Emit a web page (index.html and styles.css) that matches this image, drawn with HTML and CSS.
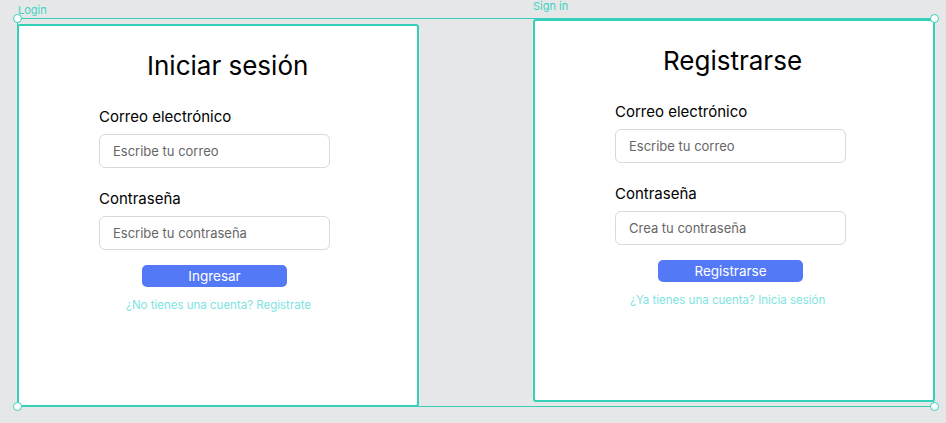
FILE: index.html
```html
<!DOCTYPE html>
<html lang="es">
<head>
<meta charset="utf-8">
<title>Login / Sign in</title>
<link rel="stylesheet" href="styles.css">
</head>
<body>
<div class="canvas">
  <span class="frame-name name-login">Login</span>
  <span class="frame-name name-sign">Sign in</span>

  <section class="frame frame-login">
    <h1 class="title">Iniciar sesión</h1>
    <form class="form">
      <label class="label">Correo electrónico</label>
      <div class="input">Escribe tu correo</div>
      <label class="label label-second">Contraseña</label>
      <div class="input">Escribe tu contraseña</div>
      <div class="button">Ingresar</div>
    </form>
    <a class="link link-login">¿No tienes una cuenta? Registrate</a>
  </section>

  <section class="frame frame-sign">
    <h1 class="title">Registrarse</h1>
    <form class="form">
      <label class="label">Correo electrónico</label>
      <div class="input">Escribe tu correo</div>
      <label class="label label-second">Contraseña</label>
      <div class="input">Crea tu contraseña</div>
      <div class="button">Registrarse</div>
    </form>
    <a class="link link-sign">¿Ya tienes una cuenta? Inicia sesión</a>
  </section>

  <div class="selection"></div>
  <span class="handle h-tl"></span>
  <span class="handle h-tr"></span>
  <span class="handle h-bl"></span>
  <span class="handle h-br"></span>
</div>
</body>
</html>
```
FILE: styles.css
```css
html, body {
  margin: 0;
  padding: 0;
}
body {
  background: #e6e7e8;
  font-family: Inter, "Noto Sans", sans-serif;
  width: 946px;
  height: 423px;
  overflow: hidden;
}
.canvas {
  position: relative;
  width: 946px;
  height: 423px;
}
.frame-name {
  position: absolute;
  font-size: 11px;
  line-height: 13px;
  color: #3fd3bf;
}
.name-login { left: 18px; top: 4px; }
.name-sign { left: 533px; top: 0px; }

.frame {
  position: absolute;
  width: 402px;
  height: 383px;
  box-sizing: border-box;
  border: 2px solid #36cfb8;
  border-radius: 3px;
  background: #fff;
  padding-top: 24px;
  display: flex;
  flex-direction: column;
}
.frame-login { left: 17px; top: 24px; }
.frame-sign { left: 533px; top: 19px; }

.title {
  margin: 0 0 0 128px;
  font-size: 26px;
  line-height: 32px;
  font-weight: 400;
  color: #000;
}
.form {
  margin: 26px 0 0 80px;
  width: 231px;
  display: flex;
  flex-direction: column;
}
.label {
  font-size: 15px;
  line-height: 18px;
  color: #000;
}
.label-second { margin-top: 22px; }
.input {
  margin-top: 8px;
  height: 34px;
  box-sizing: border-box;
  border: 1px solid #d9d9d9;
  border-radius: 6px;
  padding-left: 13px;
  display: flex;
  align-items: center;
  font-size: 13px;
  color: #666;
}
.button {
  margin: 15px 0 0 43px;
  width: 145px;
  height: 22px;
  border-radius: 5px;
  background: #5479f7;
  color: #fff;
  font-size: 13.5px;
  display: flex;
  align-items: center;
  justify-content: center;
}
.link {
  margin-top: 11px;
  font-size: 11.5px;
  line-height: 15px;
  color: #7de4e2;
}
.link-login { margin-left: 107px; }
.link-sign { margin-left: 95px; }

.selection {
  position: absolute;
  left: 17px;
  top: 18px;
  width: 917px;
  height: 389px;
  box-sizing: border-box;
  border: 1px solid #36cfb8;
  pointer-events: none;
}
.handle {
  position: absolute;
  width: 9px;
  height: 9px;
  box-sizing: border-box;
  border: 1.5px solid #36cfb8;
  border-radius: 50%;
  background: #fff;
}
.h-tl { left: 13px; top: 14px; }
.h-tr { left: 930px; top: 14px; }
.h-bl { left: 13px; top: 402px; }
.h-br { left: 930px; top: 402px; }
```
